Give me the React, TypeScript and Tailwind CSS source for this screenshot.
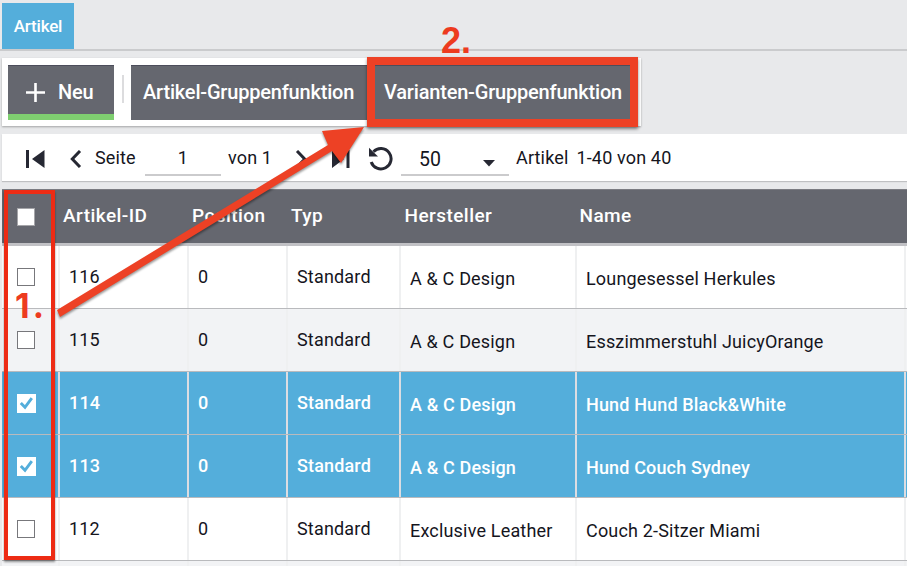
import type { ReactNode } from "react";

type Row = { id: string; maker: string; name: string; checked?: boolean };

const rows: Row[] = [
  { id: "116", maker: "A & C Design", name: "Loungesessel Herkules" },
  { id: "115", maker: "A & C Design", name: "Esszimmerstuhl JuicyOrange" },
  { id: "114", maker: "A & C Design", name: "Hund Hund Black&White", checked: true },
  { id: "113", maker: "A & C Design", name: "Hund Couch Sydney", checked: true },
  { id: "112", maker: "Exclusive Leather", name: "Couch 2-Sitzer Miami" },
];

const columns = "grid grid-cols-[56px_129px_99px_113px_176px_329px_1fr]";

function Checkbox({ checked }: { checked?: boolean }) {
  if (checked) {
    return (
      <span className="flex h-[19px] w-[19px] items-center justify-center bg-white">
        <svg width="19" height="19" viewBox="0 0 19 19" fill="none" stroke="#54aedb" strokeWidth="2.9">
          <path d="M3.8 9L8 13.3L14.8 4.2" />
        </svg>
      </span>
    );
  }
  return <span className="block h-[18px] w-[18px] border border-[#77777b] bg-white" />;
}

function Cell({ children, selected, shift }: { children?: ReactNode; selected?: boolean; shift?: boolean }) {
  return (
    <div
      className={`flex items-center pl-[9px] whitespace-nowrap ${
        selected ? "border-l-2 border-[#dcdde2]" : "border-l-2 border-[#eff0f1]"
      } ${shift ? "pt-[2px]" : "pb-[2px]"}`}
    >
      {children}
    </div>
  );
}

function TableRow({ row, index }: { row: Row; index: number }) {
  const tone = row.checked
    ? "bg-[#54aedb] text-white font-medium tracking-[0.15px]"
    : index % 2
      ? "bg-[#f2f3f5] text-[#15151d] tracking-[0.18px]"
      : "bg-white text-[#15151d] tracking-[0.18px]";
  return (
    <div className={`${columns} h-[63px] border-b border-[#b9babd] text-[18px] ${tone}`}>
      <div className="flex items-center pl-[15px]">
        <Checkbox checked={row.checked} />
      </div>
      <Cell selected={row.checked}>{row.id}</Cell>
      <Cell selected={row.checked}>0</Cell>
      <Cell selected={row.checked}>Standard</Cell>
      <Cell selected={row.checked} shift>{row.maker}</Cell>
      <Cell selected={row.checked} shift>{row.name}</Cell>
      <Cell selected={row.checked} />
    </div>
  );
}

export default function App() {
  return (
    <div className="relative h-[566px] w-[907px] overflow-hidden bg-[#e8e9eb] font-['Roboto',sans-serif] text-[#15151d]">
      <div className="flex h-[51px] items-start border-b-2 border-[#cacbcd] pt-[3px] pl-[2px]">
        <div className="flex h-[46px] w-[72px] items-center justify-center bg-[#54aedb] pt-px text-[17px] tracking-[-0.2px] font-medium text-white">
          Artikel
        </div>
      </div>

      <div className="mt-[7px] ml-[2px] flex h-[68px] w-[639px] bg-white pt-[7px] pl-[6px] text-[20px] tracking-[-0.19px] font-medium text-white shadow-[0_1px_2px_rgba(0,0,0,0.3)]">
        <div className="flex h-[55px] w-[106px] items-center border-t border-b-6 border-t-[#4c4d5b] border-b-[#7fcf70] bg-[#65676f] pl-[18px]">
          <svg className="mt-[4px]" width="19" height="19" viewBox="0 0 19 19" stroke="white" strokeWidth="2.6">
            <path d="M0 9.5H19M9.5 0V19" />
          </svg>
          <span className="ml-[13px] pt-[3px]">Neu</span>
        </div>
        <div className="mt-[10px] ml-2 h-[28px] w-[2px] bg-[#dcdcde]" />
        <div className="ml-[7px] flex h-[55px] w-[239px] items-center border-t border-[#4c4d5b] bg-[#65676f] pb-[2px] pl-[12px] whitespace-nowrap">
          Artikel-Gruppenfunktion
        </div>
        <div className="flex h-[55px] w-[264px] items-center border-t border-[#4c4d5b] bg-[#65676f] pb-[2px] pl-[14px] whitespace-nowrap">
          Varianten-Gruppenfunktion
        </div>
      </div>

      <div className="mt-2 ml-[2px] flex h-[47px] items-start bg-white text-[18px] tracking-[0.15px] whitespace-nowrap shadow-[0_1px_1px_#bfc0c2]">
        <svg className="mt-[15px] ml-[24px]" width="19" height="20" viewBox="0 0 19 20" fill="#262833">
          <path d="M0 1h3v18h-3zM18.5 1v18L6 10z" />
        </svg>
        <svg className="mt-[16px] ml-[25px]" width="12" height="18" viewBox="0 0 12 18" fill="none" stroke="#262833" strokeWidth="3">
          <path d="M10 1L2.3 9L10 17" />
        </svg>
        <span className="mt-[10px] ml-[13px] w-[48px]">Seite</span>
        <span className="ml-[2px] h-[42px] w-[76px] border-b-2 border-[#cbcbcd] pt-[10px] text-center">1</span>
        <span className="mt-[10px] ml-[7px] w-[50px]">von 1</span>
        <svg className="mt-[16px] ml-[17px]" width="12" height="18" viewBox="0 0 12 18" fill="none" stroke="#262833" strokeWidth="3">
          <path d="M2 1L9.7 9L2 17" />
        </svg>
        <svg className="mt-[15px] ml-[24px]" width="19" height="20" viewBox="0 0 19 20" fill="#262833">
          <path d="M15.5 1h3v18h-3zM1 1v18L13 10z" />
        </svg>
        <svg className="mt-[12px] ml-[18px]" width="26" height="25" viewBox="0 0 26 25" fill="none" stroke="#262833" strokeWidth="3">
          <path d="M5.5 5.7A10.2 10.2 0 1 1 3.2 16" />
          <path d="M1 1.8v8.6h9z" fill="#262833" stroke="none" />
        </svg>
        <span className="ml-[7px] flex h-[42px] w-[108px] border-b-2 border-[#cbcbcd] pt-[11px] pl-[18px]">
          <span className="w-[64px] text-[19.5px]">50</span>
          <svg className="mt-[15px]" width="12" height="7" viewBox="0 0 12 7" fill="#262833">
            <path d="M0 0h12L6 6.5z" />
          </svg>
        </span>
        <span className="mt-[10px] ml-[7px]">Artikel</span>
        <span className="mt-[10px] ml-[8px]">1-40 von 40</span>
      </div>

      <div className="mt-2 ml-[2px]">
        <div className="grid h-[57px] grid-cols-[61px_129px_99px_113.5px_175px_1fr] items-center border-t border-b-3 border-t-[#7b7c82] border-b-[#c1c1c5] bg-[#65676f] text-[19px] font-medium tracking-[0.45px] text-white">
          <span className="ml-[15px] block h-[18px] w-[18px] border border-[#a5a5a9] bg-white" />
          <span>Artikel-ID</span>
          <span>Position</span>
          <span>Typ</span>
          <span>Hersteller</span>
          <span>Name</span>
        </div>
        {rows.map((row, i) => (
          <TableRow key={row.id} row={row} index={i} />
        ))}
        <div className={`${columns} h-[5px] bg-[#f2f3f5]`}>
          <div />
          <Cell /><Cell /><Cell /><Cell /><Cell /><Cell />
        </div>
      </div>

      {/* Numbered step annotations above the interface */}
      <div className="absolute top-[190px] left-[4px] h-[370px] w-[51px] border-4 border-[#ed2b14] shadow-[0_2px_2px_rgba(0,0,0,0.4)]" />
      <div className="absolute top-[57px] left-[367px] h-[70px] w-[271px] border-8 border-[#ed4125] shadow-[0_2px_3px_rgba(0,0,0,0.45)]" />
      <svg className="absolute top-0 left-0 drop-shadow-[0_2px_1px_rgba(0,0,0,0.4)]" width="907" height="566" viewBox="0 0 907 566" fill="#ed4125">
        <path d="M57 310L328 145L322 131L364 127L341 163L332 151L60 317Z" />
      </svg>
      <span className="absolute top-[21px] left-[441px] font-['Liberation_Sans',sans-serif] text-[36px] leading-[40px] font-bold text-[#ed3b1f]">2.</span>
      <span className="absolute top-[286px] left-[15px] font-['Inter',sans-serif] text-[34px] leading-[40px] font-bold text-[#ed3b1f]">
        1<span className="ml-[3px]">.</span>
      </span>
    </div>
  );
}
